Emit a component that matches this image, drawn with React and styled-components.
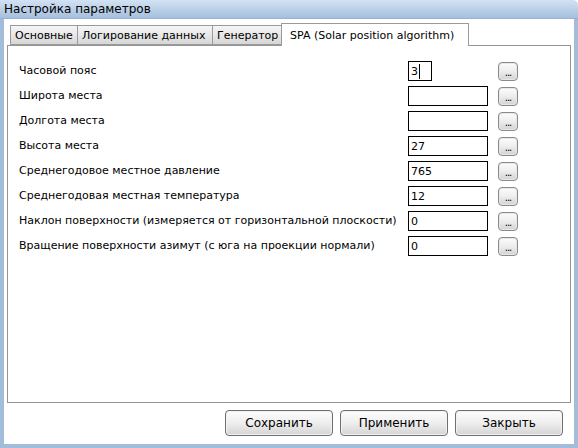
import React from 'react';
import styled, { createGlobalStyle } from 'styled-components';

const Global = createGlobalStyle`
  html, body { margin: 0; padding: 0; background: #fff; }
  body { width: 578px; height: 448px; overflow: hidden; }
  * { box-sizing: border-box; }
`;

const Window = styled.div`
  width: 578px;
  height: 448px;
  display: flex;
  flex-direction: column;
  font-family: "DejaVu Sans", "Liberation Sans", sans-serif;
  font-size: 11px;
  color: #000;
`;

const TitleBar = styled.div`
  height: 19px;
  flex: none;
  padding-left: 4px;
  display: flex;
  align-items: center;
  background: linear-gradient(#d3e2f3, #b7cde6 60%, #a5bfdd);
  border-top-right-radius: 5px;
  border-bottom: 1px solid #95b2d6;
  font-size: 12px;
`;

const Client = styled.div`
  flex: 1;
  display: flex;
  flex-direction: column;
  background: #fff;
  border: 4px solid #a3bcda;
  border-top: none;
  padding: 3px 3px 0 3px;
`;

const TabStrip = styled.div`
  display: flex;
  align-items: flex-end;
  height: 23px;
  padding-left: 3px;
  position: relative;
  z-index: 1;
`;

const Tab = styled.div`
  width: ${p => p.$w}px;
  height: ${p => (p.$active ? 23 : 20)}px;
  margin-bottom: ${p => (p.$active ? -1 : 0)}px;
  display: flex;
  align-items: center;
  padding-left: ${p => (p.$active ? 8 : 4)}px;
  white-space: nowrap;
  border: 1px solid #9a9a9a;
  border-bottom: ${p => (p.$active ? 'none' : '1px solid #9a9a9a')};
  margin-right: ${p => (p.$active ? 0 : -1)}px;
  background: ${p => (p.$active ? '#fff' : 'linear-gradient(#f6f6f6, #e6e6e6 55%, #d6d6d6)')};
`;

const Pane = styled.div`
  height: 358px;
  border: 1px solid #959595;
  padding: 15px 0 0 11px;
  display: flex;
  flex-direction: column;
  gap: 5px;
`;

const Row = styled.div`
  display: grid;
  grid-template-columns: 389px 80px 30px;
  height: 20px;
  align-items: center;
`;

const Label = styled.div`
  white-space: nowrap;
  margin-top: -1px;
`;

const Field = styled.div`
  width: ${p => (p.$small ? 24 : 80)}px;
  height: 20px;
  border: 1px solid #000;
  padding-left: 2px;
  display: flex;
  align-items: center;
  font-size: 11px;
`;

const Caret = styled.span`
  display: inline-block;
  width: 1px;
  height: 15px;
  background: #000;
  margin-left: 1px;
`;

const DotsButton = styled.div`
  width: 20px;
  height: 19px;
  justify-self: end;
  border: 1px solid #8a8a8a;
  border-radius: 4px;
  background: linear-gradient(#fcfcfc, #ededed 50%, #d2d2d2);
  box-shadow: inset 0 0 0 1px #e8e8e8;
  display: flex;
  align-items: flex-end;
  justify-content: center;
  font-size: 10px;
  line-height: 12px;
  letter-spacing: -1px;
  padding-bottom: 1px;
`;

const Footer = styled.div`
  display: flex;
  justify-content: flex-end;
  gap: 7px;
  padding: 7px 8px 0 0;
`;

const Button = styled.div`
  width: 108px;
  height: 26px;
  border: 1px solid #6f6f6f;
  border-radius: 4px;
  background: linear-gradient(#fdfdfd, #eeeeee 50%, #d4d4d4);
  box-shadow: inset 0 0 0 1px #f2f2f2;
  display: flex;
  align-items: center;
  justify-content: center;
  font-size: 12px;
`;

const tabs = [
  { title: 'Основные', w: 68 },
  { title: 'Логирование данных', w: 136 },
  { title: 'Генератор', w: 70 },
  { title: 'SPA (Solar position algorithm)', w: 188, active: true },
];

const rows = [
  { label: 'Часовой пояс', value: '3', small: true },
  { label: 'Широта места', value: '' },
  { label: 'Долгота места', value: '' },
  { label: 'Высота места', value: '27' },
  { label: 'Среднегодовое местное давление', value: '765' },
  { label: 'Среднегодовая местная температура', value: '12' },
  { label: 'Наклон поверхности (измеряется от горизонтальной плоскости)', value: '0' },
  { label: 'Вращение поверхности азимут (с юга на проекции нормали)', value: '0' },
];

export default function App() {
  return (
    <>
      <Global />
      <Window>
        <TitleBar>Настройка параметров</TitleBar>
        <Client>
          <TabStrip>
            {tabs.map(t => (
              <Tab key={t.title} $w={t.w} $active={t.active}>{t.title}</Tab>
            ))}
          </TabStrip>
          <Pane>
            {rows.map(r => (
              <Row key={r.label}>
                <Label>{r.label}</Label>
                <Field $small={r.small}>
                  {r.value}
                  {r.small && <Caret />}
                </Field>
                <DotsButton>...</DotsButton>
              </Row>
            ))}
          </Pane>
          <Footer>
            <Button>Сохранить</Button>
            <Button>Применить</Button>
            <Button>Закрыть</Button>
          </Footer>
        </Client>
      </Window>
    </>
  );
}
